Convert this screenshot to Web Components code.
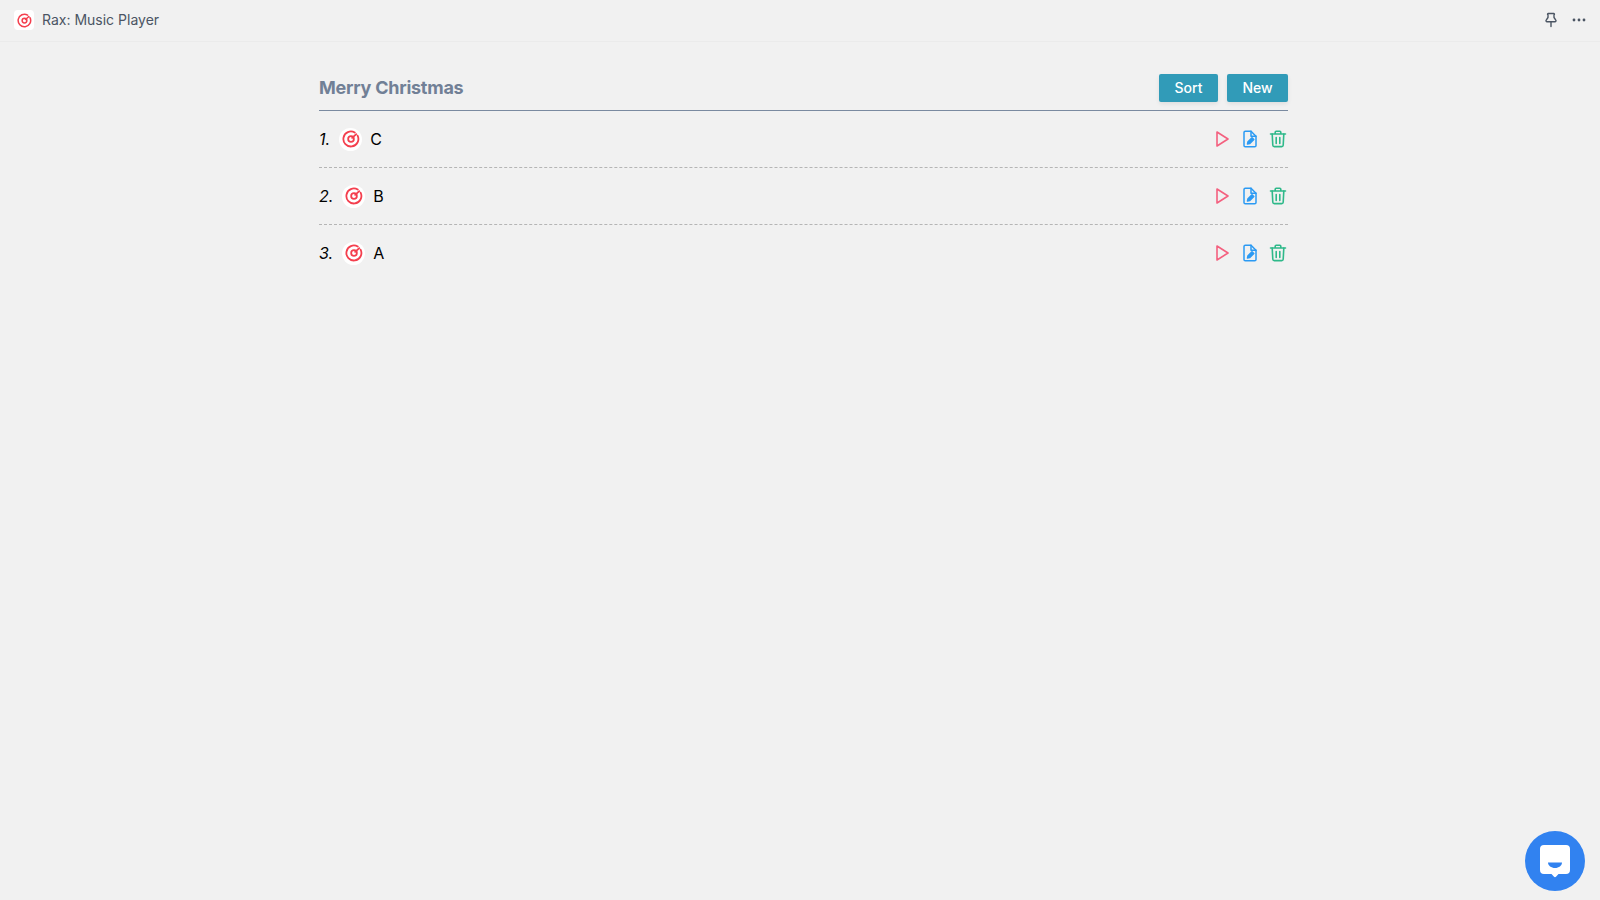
<!DOCTYPE html>
<html>
<head>
<meta charset="utf-8">
<title>Rax: Music Player</title>
<style>
  html, body { margin: 0; height: 100%; }
  body { background: #f1f1f1; font-family: Inter, "Liberation Sans", sans-serif; overflow: hidden; }
</style>
</head>
<body>
<app-shell>
  <title-bar slot="bar">Rax: Music Player</title-bar>
  <playlist-view title="Merry Christmas">
    <track-row num="1." name="C"></track-row>
    <track-row num="2." name="B"></track-row>
    <track-row num="3." name="A" last></track-row>
  </playlist-view>
</app-shell>
<chat-bubble></chat-bubble>

<script>
const discIcon = (size) => `
  <svg width="${size}" height="${size}" viewBox="0 0 24 24" fill="none" stroke="#f43f4e" stroke-width="2.4" stroke-linecap="round">
    <path d="M20.800 7.500A10 10 0 1 1 17 3.400"/>
    <circle cx="12" cy="12" r="3.800"/>
    <path d="M13.500 10.500 L19 5.500"/>
  </svg>`;

class AppShell extends HTMLElement {
    constructor() {
        super();
        this.attachShadow({ mode: "open" }).innerHTML = `
          <style>
            :host { display: flex; flex-direction: column; height: 100vh; }
            main { flex: 1; display: flex; justify-content: center; padding: 32px 0 0 7px; }
          </style>
          <slot name="bar"></slot>
          <main><slot></slot></main>
        `;
    }
}

class TitleBar extends HTMLElement {
    constructor() {
        super();
        this.attachShadow({ mode: "open" }).innerHTML = `
          <style>
            :host { display: flex; align-items: center; height: 40px; padding: 0 13px 1px 14px; border-bottom: 1px solid #ebebeb; color: #4b5563; font-size: 14px; }
            .logo { width: 20px; height: 20px; border-radius: 4px; background: #fff; display: flex; align-items: center; justify-content: center; margin-right: 8px; }
            .name { flex: 1; padding-bottom: 1px; }
            .actions { display: flex; align-items: center; gap: 12px; }
            svg { display: block; }
          </style>
          <span class="logo">${discIcon(15)}</span>
          <span class="name"><slot></slot></span>
          <span class="actions">
            <svg width="16" height="16" viewBox="0 0 16 16" fill="none" stroke="#4b5563" stroke-width="1.400" stroke-linejoin="round" stroke-linecap="round">
              <path d="M5.200 1.500h5.600a.8.800 0 0 1 .2 1.500v2.500l1.800 2.700a1 1 0 0 1-.8 1.600H4a1 1 0 0 1-.8-1.600L5 5.500V3a.8.800 0 0 1 .2-1.500ZM8 9.800V14.500"/>
            </svg>
            <svg width="16" height="16" viewBox="0 0 16 16" fill="#4b5563">
              <circle cx="3" cy="8" r="1.400"/><circle cx="8" cy="8" r="1.400"/><circle cx="13" cy="8" r="1.400"/>
            </svg>
          </span>
        `;
    }
}

class PlaylistView extends HTMLElement {
    constructor() {
        super();
        this.attachShadow({ mode: "open" }).innerHTML = `
          <style>
            :host { display: block; width: 969px; }
            header { display: flex; align-items: center; justify-content: space-between; height: 28px; padding-bottom: 8px; border-bottom: 1px solid #7a8aa0; }
            h1 { margin: 0 0 1px; font-size: 18px; font-weight: 700; letter-spacing: -0.25px; color: #718096; }
            .btns { display: flex; gap: 9px; }
            button { height: 28px; padding: 0 0 1px; border: 0; border-radius: 2px; background: #319bb8; color: #fff; font: 500 14px Inter, "Liberation Sans", sans-serif; box-shadow: 0 2px 4px rgba(0,0,0,.08); }
            .sort { width: 59px; }
            .new { width: 61px; }
          </style>
          <header>
            <h1>${this.getAttribute("title")}</h1>
            <div class="btns">
              <button class="sort">Sort</button>
              <button class="new">New</button>
            </div>
          </header>
          <slot></slot>
        `;
    }
}

class TrackRow extends HTMLElement {
    constructor() {
        super();
        this.attachShadow({ mode: "open" }).innerHTML = `
          <style>
            :host { display: flex; align-items: center; height: 56px; border-bottom: 1px dashed #b5b5b5; color: #000; font-size: 16px; }
            :host([last]) { border-bottom-color: transparent; }
            .num { font-style: italic; margin-right: 9px; }
            .disc { width: 23px; height: 23px; border-radius: 50%; background: #fff; display: flex; align-items: center; justify-content: center; margin-right: 8px; }
            .name { flex: 1; }
            .actions { display: flex; align-items: center; gap: 8px; padding-right: 0.5px; }
            svg { display: block; }
          </style>
          <span class="num">${this.getAttribute("num")}</span>
          <span class="disc">${discIcon(18)}</span>
          <span class="name">${this.getAttribute("name")}</span>
          <span class="actions">
            <svg width="20" height="20" viewBox="0 0 20 20" fill="none" stroke="#f4607f" stroke-width="1.600" stroke-linejoin="round">
              <path d="M5 3 L16 10 L5 17 Z"/>
            </svg>
            <svg width="20" height="20" viewBox="0 0 20 20" fill="none" stroke="#2b9af3" stroke-width="1.500" stroke-linejoin="round" stroke-linecap="round">
              <path d="M4 3.500a1.300 1.300 0 0 1 1.300-1.300H11l5 5v9.300a1.300 1.300 0 0 1-1.300 1.300H5.300A1.300 1.300 0 0 1 4 16.500Z"/>
              <path d="M11 2.200v5h5"/>
              <path d="M7.500 15l.5-2.300 4-4 1.800 1.800-4 4Z" fill="#2b9af3"/>
            </svg>
            <svg width="20" height="20" viewBox="0 0 20 20" fill="none" stroke="#2fb98a" stroke-width="1.600" stroke-linejoin="round" stroke-linecap="round">
              <path d="M2.500 5h15M7.200 5V3.200a1 1 0 0 1 1-1h3.600a1 1 0 0 1 1 1V5"/>
              <path d="M4.200 5l.6 11.200a1.500 1.500 0 0 0 1.500 1.400h7.400a1.500 1.500 0 0 0 1.500-1.400L15.800 5"/>
              <path d="M8.200 8.500v6M11.800 8.500v6"/>
            </svg>
          </span>
        `;
    }
}

class ChatBubble extends HTMLElement {
    constructor() {
        super();
        this.attachShadow({ mode: "open" }).innerHTML = `
          <style>
            :host { position: fixed; right: 15px; bottom: 9px; width: 60px; height: 60px; border-radius: 50%; background: #3182f0; display: flex; align-items: center; justify-content: center; }
            svg { display: block; }
          </style>
          <svg width="32" height="34" viewBox="0 0 32 34">
            <path fill="#fff" d="M5 1h22a4 4 0 0 1 4 4v21a4 4 0 0 1-4 4h-7.500l-2.300 2.600a1.600 1.600 0 0 1-2.400 0L12.500 30H5a4 4 0 0 1-4-4V5a4 4 0 0 1 4-4Z"/>
            <path fill="#3182f0" d="M9 18.500h14c0 3-3.200 5.500-7 5.500s-7-2.500-7-5.500Z"/>
          </svg>
        `;
    }
}

customElements.define("app-shell", AppShell);
customElements.define("title-bar", TitleBar);
customElements.define("playlist-view", PlaylistView);
customElements.define("track-row", TrackRow);
customElements.define("chat-bubble", ChatBubble);
</script>
</body>
</html>
